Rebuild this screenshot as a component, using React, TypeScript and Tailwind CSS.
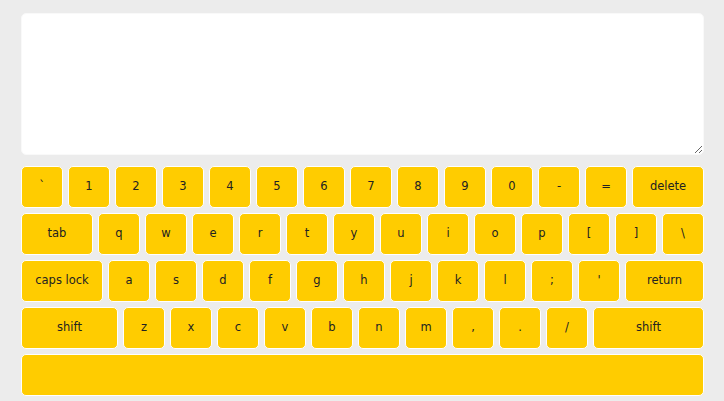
import React from 'react';

// Rows of the virtual keyboard; w is the outer width of the key in px
type Key = { label: string; w?: string };

const ROWS: Key[][] = [
  [
    { label: '`' }, { label: '1' }, { label: '2' }, { label: '3' }, { label: '4' },
    { label: '5' }, { label: '6' }, { label: '7' }, { label: '8' }, { label: '9' },
    { label: '0' }, { label: '-' }, { label: '=' },
    { label: 'delete', w: 'w-[72px]' },
  ],
  [
    { label: 'tab', w: 'w-[72px]' },
    { label: 'q' }, { label: 'w' }, { label: 'e' }, { label: 'r' }, { label: 't' },
    { label: 'y' }, { label: 'u' }, { label: 'i' }, { label: 'o' }, { label: 'p' },
    { label: '[' }, { label: ']' }, { label: '\\' },
  ],
  [
    { label: 'caps lock', w: 'w-[82px]' },
    { label: 'a' }, { label: 's' }, { label: 'd' }, { label: 'f' }, { label: 'g' },
    { label: 'h' }, { label: 'j' }, { label: 'k' }, { label: 'l' }, { label: ';' },
    { label: "'" },
    { label: 'return', w: 'w-[79px]' },
  ],
  [
    { label: 'shift', w: 'w-[97px]' },
    { label: 'z' }, { label: 'x' }, { label: 'c' }, { label: 'v' }, { label: 'b' },
    { label: 'n' }, { label: 'm' }, { label: ',' }, { label: '.' }, { label: '/' },
    { label: 'shift', w: 'w-[111px]' },
  ],
];

export default function App() {
  return (
    <div
      className="min-h-screen bg-[#ececec] pl-[21px] pt-[13px]"
      style={{ fontFamily: '"DejaVu Sans", Verdana, sans-serif' }}
    >
      <div className="w-[683px]">
        <textarea className="block w-[683px] h-[142px] mb-[11px] p-[5px] bg-white border border-[#f9f9f9] rounded-[5px] outline-none" />

        <div className="flex flex-col gap-[5px]">
          {ROWS.map((row, i) => (
            <div key={i} className="flex gap-[5px]">
              {row.map((k, j) => (
                <div
                  key={j}
                  className={`${k.w ?? 'w-[42px]'} h-[42px] flex items-center justify-center pb-px bg-[#ffcc00] border border-white rounded-[5px] text-[11.5px] text-[#222]`}
                >
                  {k.label}
                </div>
              ))}
            </div>
          ))}
          {/* space bar */}
          <div className="w-[683px] h-[42px] bg-[#ffcc00] border border-white rounded-[5px]" />
        </div>
      </div>
    </div>
  );
}
